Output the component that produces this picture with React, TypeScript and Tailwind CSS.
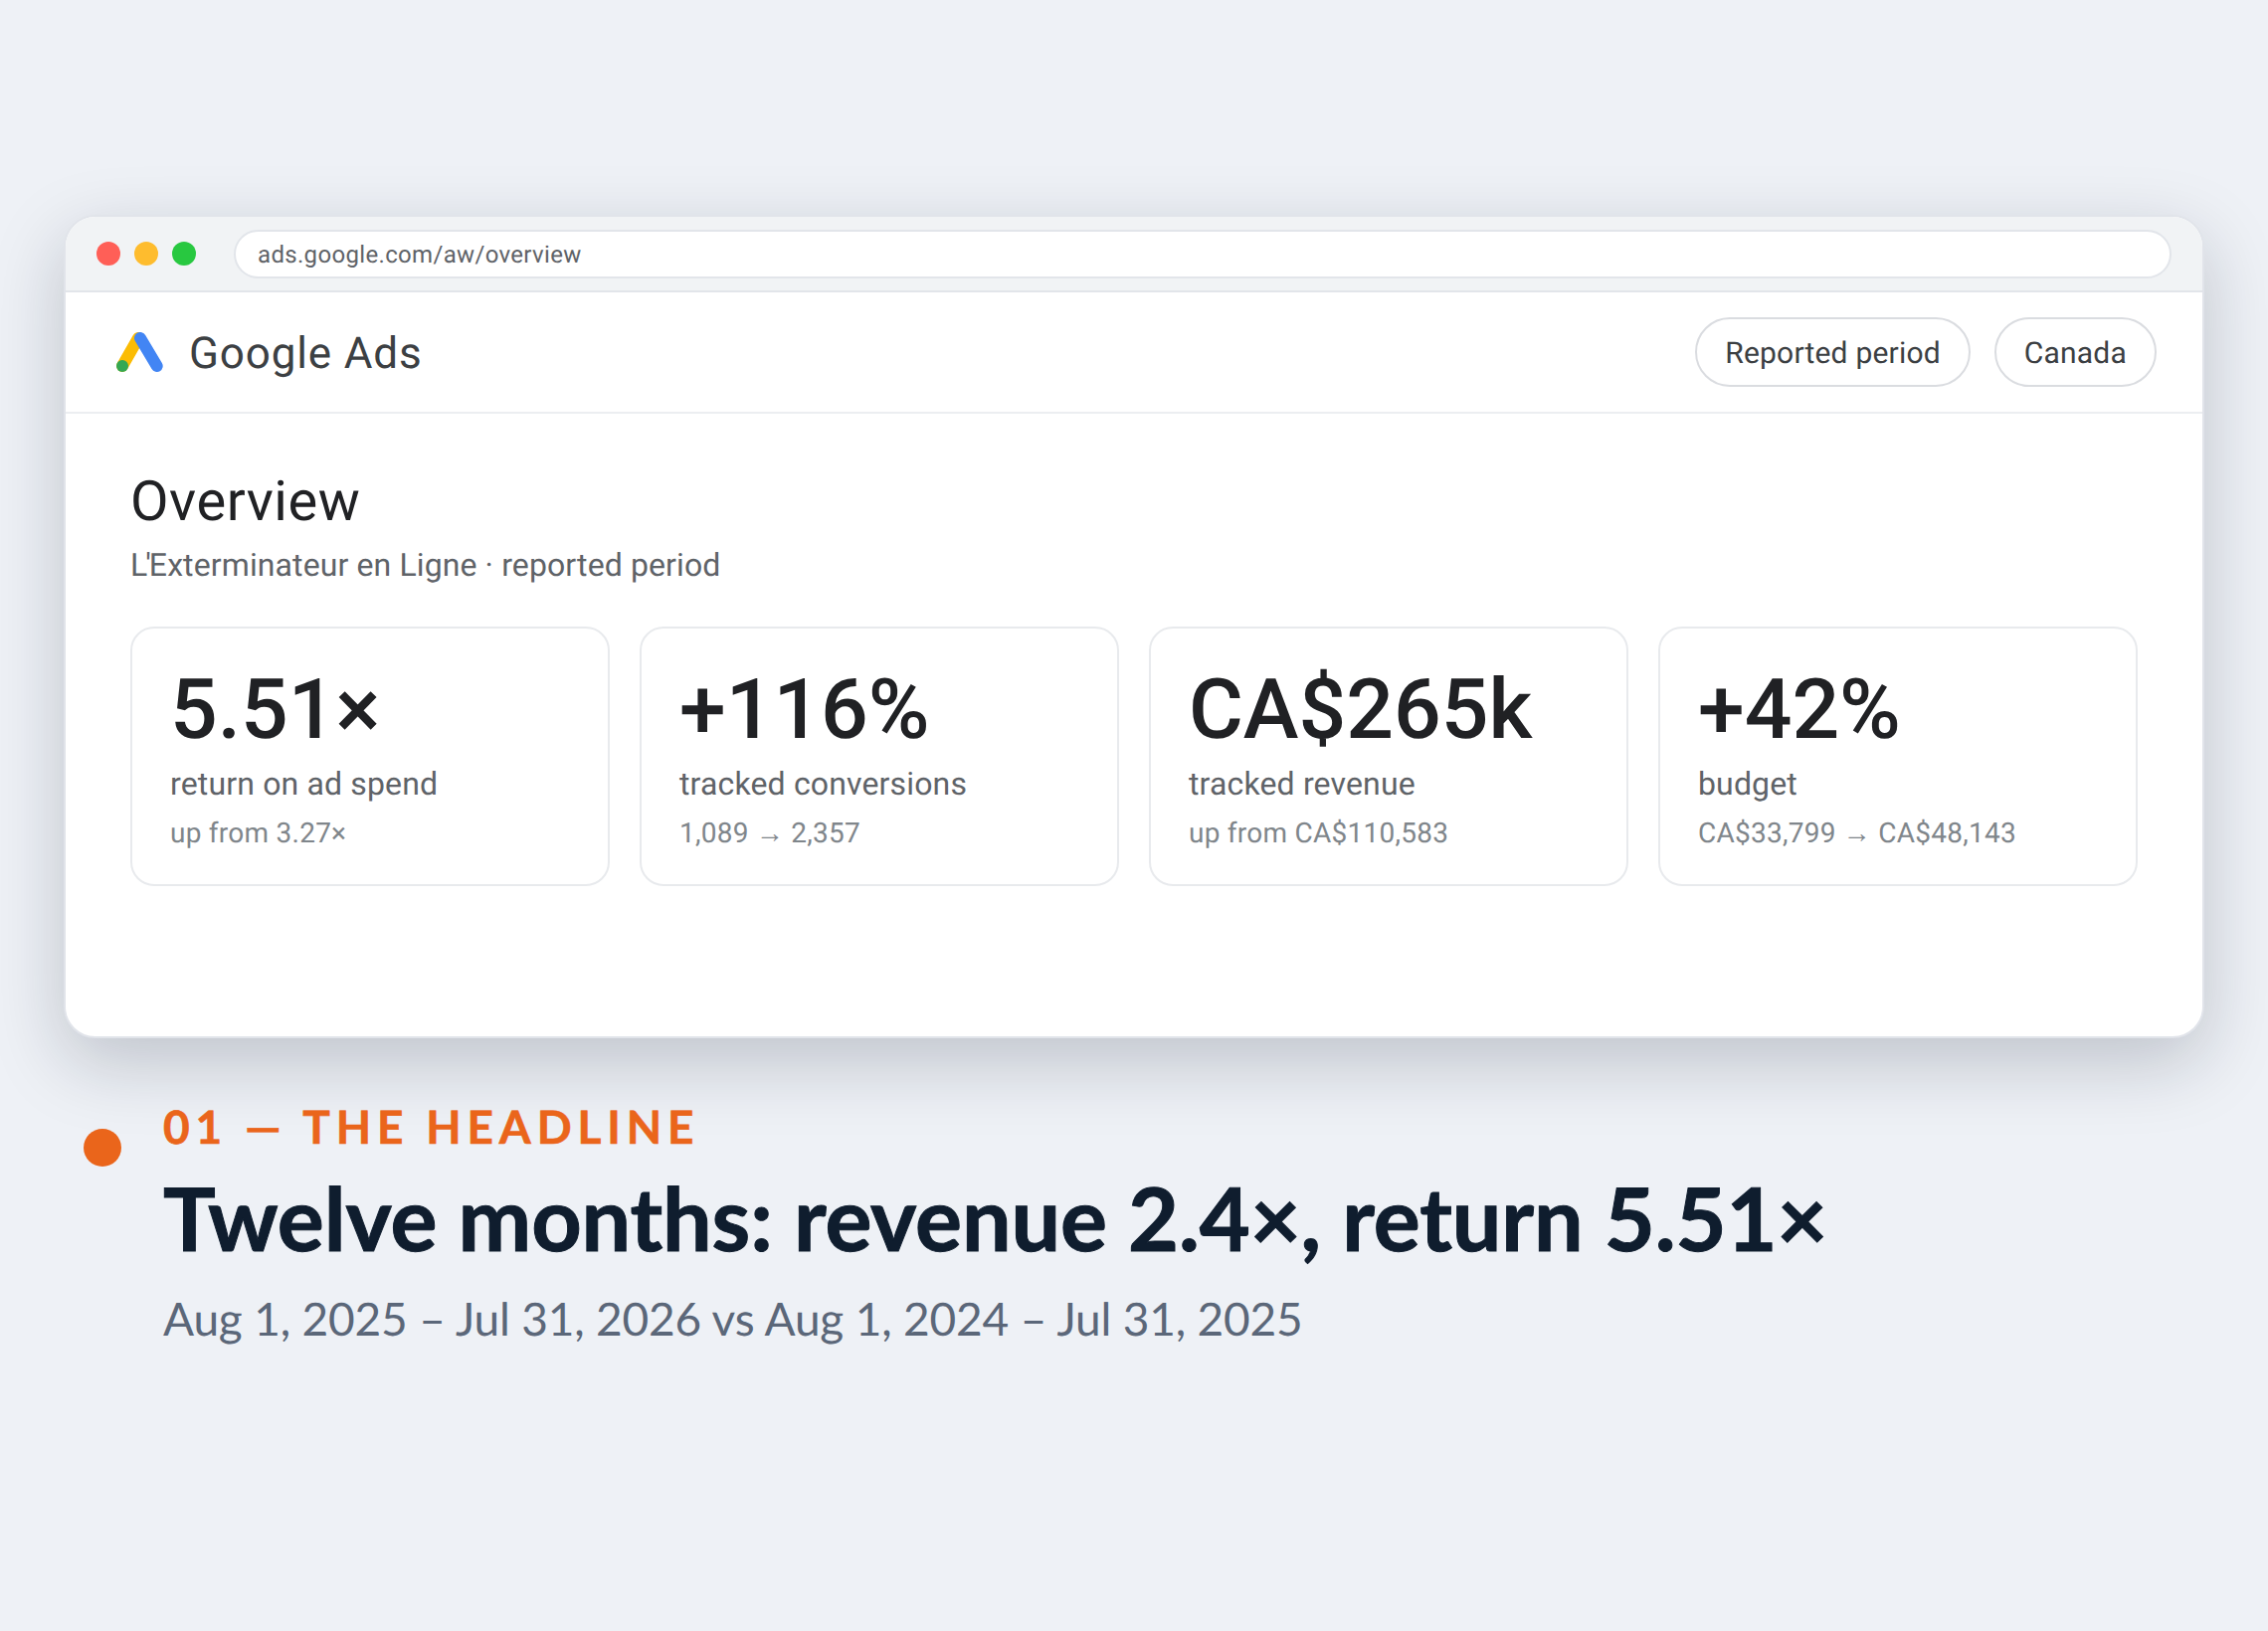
const cards = [
  { value: "5.51×", label: "return on ad spend", note: ["up from 3.27×"] },
  { value: "+116%", label: "tracked conversions", note: ["1,089", "2,357"] },
  { value: "CA$265k", label: "tracked revenue", note: ["up from CA$110,583"] },
  { value: "+42%", label: "budget", note: ["CA$33,799", "CA$48,143"] },
];

function AdsLogo() {
  return (
    <svg width="47" height="40" viewBox="0 0 47 40" fill="none">
      <path d="M6 34 L22 6" stroke="#fbbc04" strokeWidth="12" strokeLinecap="round" />
      <path d="M24 6 L40.700 34" stroke="#4285f4" strokeWidth="12" strokeLinecap="round" />
      <circle cx="6" cy="34" r="6" fill="#34a853" />
    </svg>
  );
}

export default function App() {
  return (
    <div className="flex h-[1640px] w-[2280px] flex-col overflow-hidden bg-[#eef1f6] px-[64px] pt-[216px] font-['Roboto',sans-serif] [text-rendering:geometricPrecision]">
      <div className="flex h-[828px] flex-col overflow-hidden rounded-[32px] border-2 border-[#e1e4ea] bg-white shadow-[0_24px_72px_rgba(15,23,42,0.21)]">
        <div className="flex h-[76px] shrink-0 items-center gap-[38px] border-b-2 border-[#e2e5ea] bg-[#f1f3f5] px-[31px]">
          <div className="flex gap-[14px]">
            <span className="size-[24px] rounded-full bg-[#ff5f57]" />
            <span className="size-[24px] rounded-full bg-[#febc2e]" />
            <span className="size-[24px] rounded-full bg-[#28c840]" />
          </div>
          <div className="flex h-[49px] flex-1 items-center rounded-full border-2 border-[#e2e5ea] bg-white px-[22px] pt-[1px] text-[24px] tracking-[0.33px] text-[#5f6368]">
            ads.google.com/aw/overview
          </div>
        </div>
        <div className="flex h-[122px] shrink-0 items-center justify-between border-b-2 border-[#eceef1] pl-[51px] pr-[46px]">
          <div className="flex items-center gap-[26px]">
            <AdsLogo />
            <span className="pt-[2px] text-[44px] tracking-[0.85px] text-[#3c4043]">Google Ads</span>
          </div>
          <div className="flex gap-[24px]">
            <div className="flex h-[70px] items-center rounded-full border-2 border-[#dadce0] px-[28px] pt-[2px] text-[30px] tracking-[0.2px] text-[#3c4043]">Reported period</div>
            <div className="flex h-[70px] items-center rounded-full border-2 border-[#dadce0] px-[28px] pt-[2px] text-[30px] tracking-[0.2px] text-[#3c4043]">Canada</div>
          </div>
        </div>
        <div className="px-[65px] pt-[55px]">
          <h1 className="text-[56px] leading-[66px] tracking-[0.55px] text-[#202124]">Overview</h1>
          <p className="mt-[12px] text-[32px] leading-[38px] tracking-[0.11px] text-[#5f6368]">
            <span className="tracking-[-2px]">L'</span>Exterminateur en Ligne · reported period
          </p>
          <div className="mt-[43px] grid grid-cols-4 gap-[30px]">
            {cards.map((c) => (
              <div key={c.label} className="h-[261px] rounded-[24px] border-2 border-[#e8eaed] px-[38px] pt-[40px]">
                <div className="text-[84px] font-medium leading-[84px] text-[#202124]">{c.value}</div>
                <div className="mt-[12px] text-[32px] leading-[40px] tracking-[0.15px] text-[#5f6368]">{c.label}</div>
                <div className="mt-[12px] text-[28px] leading-[36px] tracking-[0.25px] text-[#80868b]">
                  {c.note.length === 2 ? `${c.note[0]} → ${c.note[1]}` : c.note[0]}
                </div>
              </div>
            ))}
          </div>
        </div>
      </div>
      <div className="flex gap-[42px] pl-[20px] pt-[62px] font-['Lato',sans-serif]">
        <span className="mt-[29px] size-[38px] shrink-0 rounded-full bg-[#ea651b]" />
        <div>
          <div className="text-[46px] font-bold leading-[54px] tracking-[0.127em] text-[#ea651b] [-webkit-text-stroke:0.6px_#ea651b]">01 — THE HEADLINE</div>
          <div className="mt-[14px] text-[88px] font-bold leading-[100px] tracking-[-0.12px] text-[#0f1d2e] [-webkit-text-stroke:1px_#0f1d2e]">Twelve months: revenue 2.4×, return 5.51×</div>
          <div className="mt-[24px] text-[46px] leading-[56px] tracking-[-0.18px] text-[#5b6779]">Aug 1, 2025 – Jul 31, 2026 vs Aug 1, 2024 – Jul 31, 2025</div>
        </div>
      </div>
    </div>
  );
}
